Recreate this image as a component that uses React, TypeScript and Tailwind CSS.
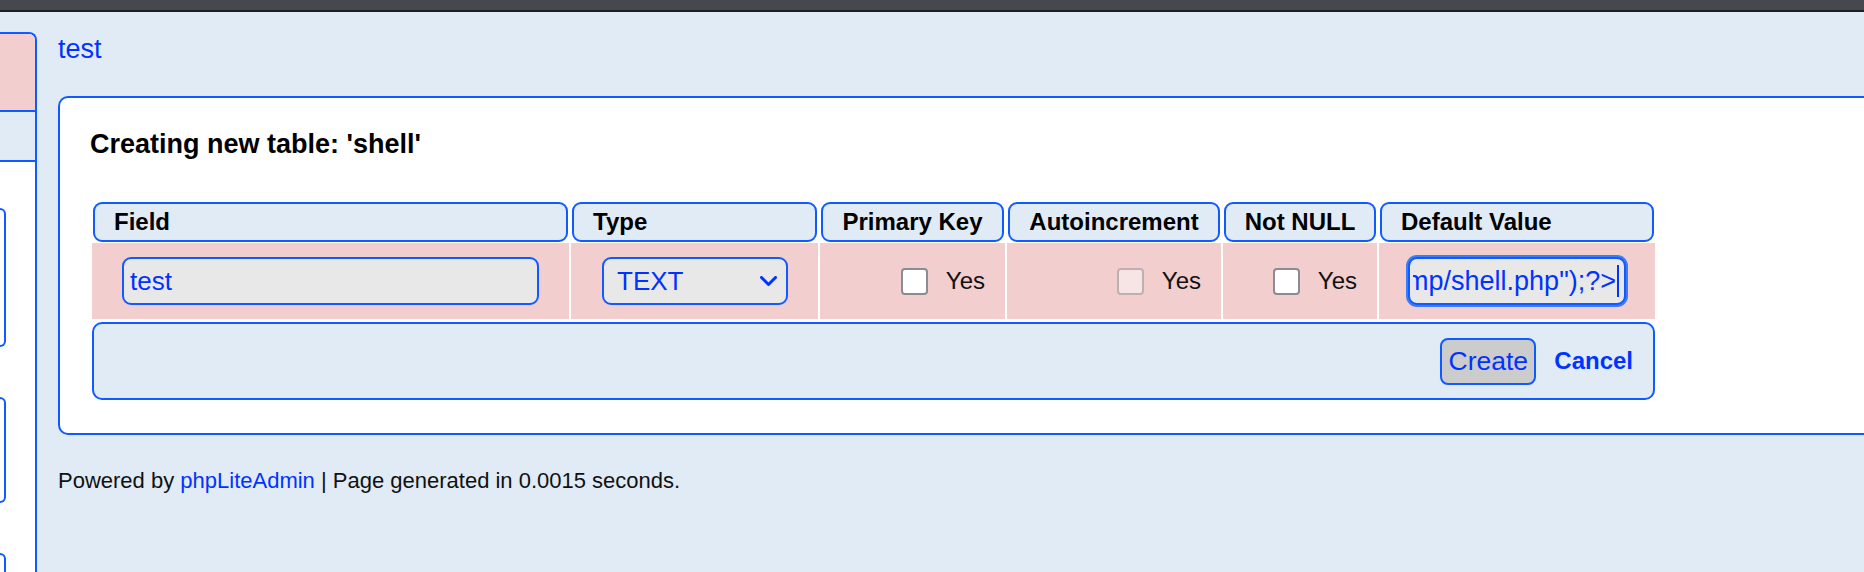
import React from "react";

const BLUE_BORDER = "border-[#0f5bff]";

function Checkbox({ disabled }: { disabled?: boolean }) {
  return (
    <div
      className={
        disabled
          ? "w-[27px] h-[27px] shrink-0 rounded-[4px] border-2 border-[#bdb0b1] bg-[#f7e5e5]"
          : "w-[27px] h-[27px] shrink-0 rounded-[4px] border-2 border-[#8b8b93] bg-white"
      }
    />
  );
}

function Header({ label, center }: { label: string; center?: boolean }) {
  return (
    <div
      className={`h-[40px] mx-[1px] border-2 ${BLUE_BORDER} rounded-[9px] bg-[#e0ebf6] flex items-center px-[16px] whitespace-nowrap text-[24px] font-bold leading-none ${
        center ? "justify-center" : "justify-start pl-[19px]"
      }`}
    >
      {label}
    </div>
  );
}

function CheckCell({ disabled }: { disabled?: boolean }) {
  return (
    <div className="h-[76px] bg-[#f3cece] flex items-center justify-end pr-[20px]">
      <Checkbox disabled={disabled} />
      <span className="ml-[18px] text-[24px] leading-none text-[#111]">Yes</span>
    </div>
  );
}

export default function App() {
  return (
    <div className="w-[1864px] h-[572px] overflow-hidden bg-[#e0ebf6] font-['Liberation_Sans',Arial,sans-serif] text-black">
      <div className="h-[10px] bg-[#45484f]" />
      <div className="h-[2px] bg-[#1e1f22]" />
      <div className="flex">
        <aside
          className={`w-[37px] shrink-0 mt-[20px] h-[540px] bg-white border-t-2 border-r-2 ${BLUE_BORDER} rounded-tr-[8px] flex flex-col overflow-hidden`}
        >
          <div className={`h-[78px] shrink-0 bg-[#f3cece] border-b-2 ${BLUE_BORDER}`} />
          <div className={`h-[50px] shrink-0 bg-[#e0ebf6] border-b-2 ${BLUE_BORDER}`} />
          <div className="flex flex-col pt-[46px] gap-[50px]">
            <div className={`w-[6px] h-[139px] border-2 border-l-0 ${BLUE_BORDER} rounded-r-[8px]`} />
            <div className={`w-[6px] h-[106px] border-2 border-l-0 ${BLUE_BORDER} rounded-r-[8px]`} />
            <div className={`w-[6px] h-[106px] border-2 border-l-0 ${BLUE_BORDER} rounded-r-[8px]`} />
          </div>
        </aside>
        <main className="flex-1 min-w-0 pl-[21px]">
          <div className="pt-[22px] text-[27px] leading-[31px]">
            <a className="text-[#0033ff] no-underline">test</a>
          </div>
          <section
            className={`mt-[31px] bg-white border-2 border-r-0 ${BLUE_BORDER} rounded-l-[10px] pl-[32px] pt-[31px] pb-[33px]`}
          >
            <h2 className="-ml-[2px] text-[27px] leading-[31px] font-bold">Creating new table: 'shell'</h2>
            <div className="mt-[42px] w-[1563px]">
              <div className="grid grid-cols-[477px_247px_185px_214px_154px_276px] gap-x-[2px]">
                <Header label="Field" />
                <Header label="Type" />
                <Header label="Primary Key" center />
                <Header label="Autoincrement" center />
                <Header label="Not NULL" center />
                <Header label="Default Value" />
              </div>
              <div className="mt-[1px] grid grid-cols-[477px_247px_185px_214px_154px_276px] gap-x-[2px]">
                <div className="h-[76px] bg-[#f3cece] flex items-center px-[30px]">
                  <div
                    className={`w-full h-[48px] border-2 ${BLUE_BORDER} rounded-[9px] bg-[#e8e8e8] flex items-center pl-[6px] text-[26px] leading-none text-[#0033ff]`}
                  >
                    test
                  </div>
                </div>
                <div className="h-[76px] bg-[#f3cece] flex items-center pl-[31px]">
                  <div
                    className={`w-[186px] h-[48px] border-2 ${BLUE_BORDER} rounded-[9px] bg-[#e8e8e8] flex items-center justify-between pl-[13px] pr-[9px] text-[26px] leading-none text-[#0033ff]`}
                  >
                    <span>TEXT</span>
                    <svg width="17" height="10" viewBox="0 0 17 10" fill="none">
                      <polyline
                        points="1.5,1.5 8.5,8.5 15.5,1.5"
                        stroke="#0033ff"
                        strokeWidth="3"
                        strokeLinecap="round"
                        strokeLinejoin="round"
                      />
                    </svg>
                  </div>
                </div>
                <CheckCell />
                <CheckCell disabled />
                <CheckCell />
                <div className="h-[76px] bg-[#f3cece] flex items-center pl-[29px]">
                  <div
                    className={`w-[218px] h-[48px] border-2 ${BLUE_BORDER} rounded-[9px] bg-[#e8e8e8] shadow-[0_0_0_2px_#3d7cf5] flex items-center pl-[3px] pr-[5px]`}
                  >
                    <div className="flex-1 min-w-0 h-full flex items-center justify-end overflow-hidden whitespace-nowrap text-[27px] leading-none text-[#0033ff]">
                      <span className="shrink-0">{'/tmp/shell.php");?>'}</span>
                      <span className="inline-block ml-[1px] w-[2px] h-[32px] bg-[#0033ff] shrink-0" />
                    </div>
                  </div>
                </div>
              </div>
              <div
                className={`mt-[3px] h-[78px] border-2 ${BLUE_BORDER} rounded-[10px] bg-[#e0ebf6] flex items-center justify-end pr-[20px]`}
              >
                <div
                  className={`w-[96px] h-[47px] border-2 ${BLUE_BORDER} rounded-[8px] bg-[#cccccc] flex items-center justify-center text-[26.5px] leading-none text-[#0033ff]`}
                >
                  Create
                </div>
                <a className="ml-[18px] text-[24px] leading-none font-bold text-[#0033ff]">Cancel</a>
              </div>
            </div>
          </section>
          <div className="pt-[33px] text-[22px] leading-[25px] text-[#111]">
            Powered by <a className="text-[#0033ff]">phpLiteAdmin</a> | Page generated in 0.0015 seconds.
          </div>
        </main>
      </div>
    </div>
  );
}
